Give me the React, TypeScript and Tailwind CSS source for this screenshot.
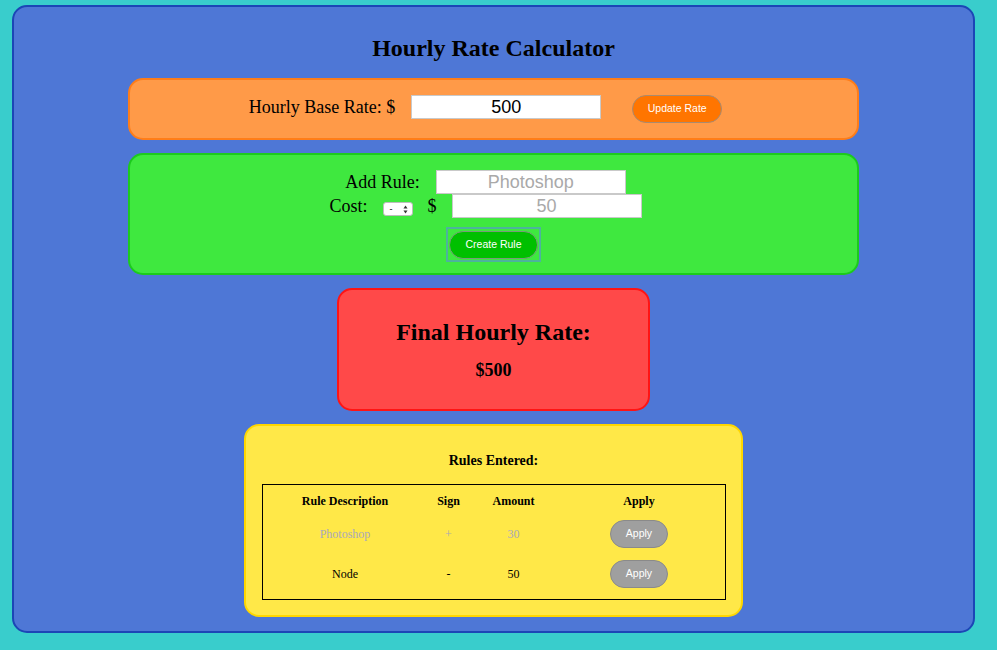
import { useState } from "react";

interface Rule {
  description: string;
  sign: "+" | "-";
  amount: number;
  applied: boolean;
}

const initialRules: Rule[] = [
  { description: "Photoshop", sign: "+", amount: 30, applied: true },
  { description: "Node", sign: "-", amount: 50, applied: false },
];

function SelectBox() {
  return (
    <div className="mt-[6px] ml-[15px] w-[30px] h-[14px] bg-white border border-[#bdbdbd] rounded-[3px] flex items-center justify-between pl-[6px] pr-[4px] font-['Liberation_Sans',Arial,sans-serif] text-[9px] leading-none text-black">
      <span>-</span>
      <svg width="5" height="9" viewBox="0 0 5 9">
        <path d="M2.5 0.5 L4.5 3.5 L0.5 3.5 Z" fill="#333" />
        <path d="M2.5 8.5 L4.5 5.5 L0.5 5.5 Z" fill="#333" />
      </svg>
    </div>
  );
}

export default function App() {
  const [baseRate, setBaseRate] = useState("500");
  const [rules] = useState<Rule[]>(initialRules);

  return (
    <div className="h-[650px] bg-[#39cdcc] pt-[5px] pl-[12px] font-['Liberation_Serif',serif] text-black">
      <div className="w-[963px] h-[628px] rounded-[15px] border-2 border-[#1c46b6] bg-[#4e77d6] pt-[27px]">
        <h1 className="text-center text-[24px] leading-[28px] font-bold">Hourly Rate Calculator</h1>

        {/* base rate */}
        <div className="mt-[16px] mx-auto w-[731px] h-[62px] rounded-[15px] border-2 border-[#ff7d18] bg-[#ff9a48] flex items-center justify-center pr-[16px]">
          <span className="text-[18px] leading-[22px] mb-[4px]">Hourly Base Rate: $</span>
          <input
            value={baseRate}
            onChange={(e) => setBaseRate(e.target.value)}
            className="ml-[16px] mb-[4px] w-[190px] h-[24px] bg-white border border-[#c9c9c9] text-center text-[18px] font-['Liberation_Sans',Arial,sans-serif] outline-none"
          />
          <button className="ml-[31px] w-[90px] h-[28px] rounded-full bg-[#ff7500] border border-[#a88a70] text-white text-[10.5px] font-['Liberation_Sans',Arial,sans-serif]">
            Update Rate
          </button>
        </div>

        {/* add rule */}
        <div className="mt-[13px] mx-auto w-[731px] h-[122px] rounded-[15px] border-2 border-[#1ccb1c] bg-[#3fe83f] pt-[15px]">
          <div className="h-[24px] flex items-center justify-center pr-[16px]">
            <span className="text-[18px] leading-[22px]">Add Rule:</span>
            <input
              placeholder="Photoshop"
              className="ml-[16px] w-[190px] h-[24px] bg-white border border-[#c9c9c9] text-center text-[18px] font-['Liberation_Sans',Arial,sans-serif] placeholder:text-[#a9a9a9] outline-none"
            />
          </div>
          <div className="h-[24px] flex items-center justify-center pr-[16px]">
            <span className="text-[18px] leading-[22px]">Cost:</span>
            <SelectBox />
            <span className="ml-[15px] text-[18px] leading-[22px]">$</span>
            <input
              placeholder="50"
              className="ml-[15px] w-[190px] h-[24px] bg-white border border-[#c9c9c9] text-center text-[18px] font-['Liberation_Sans',Arial,sans-serif] placeholder:text-[#a9a9a9] outline-none"
            />
          </div>
          <div className="mt-[9px] mx-auto w-[95px] h-[35px] border-2 border-[#4db39d] flex items-center justify-center">
            <button className="w-[89px] h-[28px] rounded-full bg-[#00c000] border border-[#7a9a7a] text-white text-[10.5px] font-['Liberation_Sans',Arial,sans-serif]">
              Create Rule
            </button>
          </div>
        </div>

        {/* final rate */}
        <div className="mt-[13px] mx-auto w-[313px] h-[123px] rounded-[15px] border-2 border-[#ff1414] bg-[#ff4949] pt-[28px] text-center">
          <h2 className="text-[24px] leading-[28px] font-bold">Final Hourly Rate:</h2>
          <p className="mt-[13px] text-[18px] leading-[22px] font-bold">${baseRate}</p>
        </div>

        {/* rules list */}
        <div className="mt-[13px] mx-auto w-[499px] h-[193px] rounded-[15px] border-2 border-[#ffd700] bg-[#ffe848] pt-[27px]">
          <h4 className="text-center text-[14px] leading-[16px] font-bold">Rules Entered:</h4>
          <div className="mt-[15px] mx-auto w-[464px] border border-black pb-[9px] text-[12px] leading-[14px]">
            <div className="h-[32px] grid grid-cols-[165px_42px_88px_163px] items-center text-center font-bold">
              <span>Rule Description</span>
              <span>Sign</span>
              <span>Amount</span>
              <span>Apply</span>
            </div>
            <div className="flex flex-col gap-[7px]">
              {rules.map((r) => (
                <div
                  key={r.description}
                  className={`h-[33px] grid grid-cols-[165px_42px_88px_163px] items-center text-center ${
                    r.applied ? "text-[#a9a9bb]" : "text-black"
                  }`}
                >
                  <span>{r.description}</span>
                  <span>{r.sign}</span>
                  <span>{r.amount}</span>
                  <span className="flex justify-center">
                    <button className="w-[58px] h-[28px] rounded-full bg-[#9f9f9f] border border-[#8a8a8a] text-white text-[10.5px] leading-none font-['Liberation_Sans',Arial,sans-serif]">
                      Apply
                    </button>
                  </span>
                </div>
              ))}
            </div>
          </div>
        </div>
      </div>
    </div>
  );
}
